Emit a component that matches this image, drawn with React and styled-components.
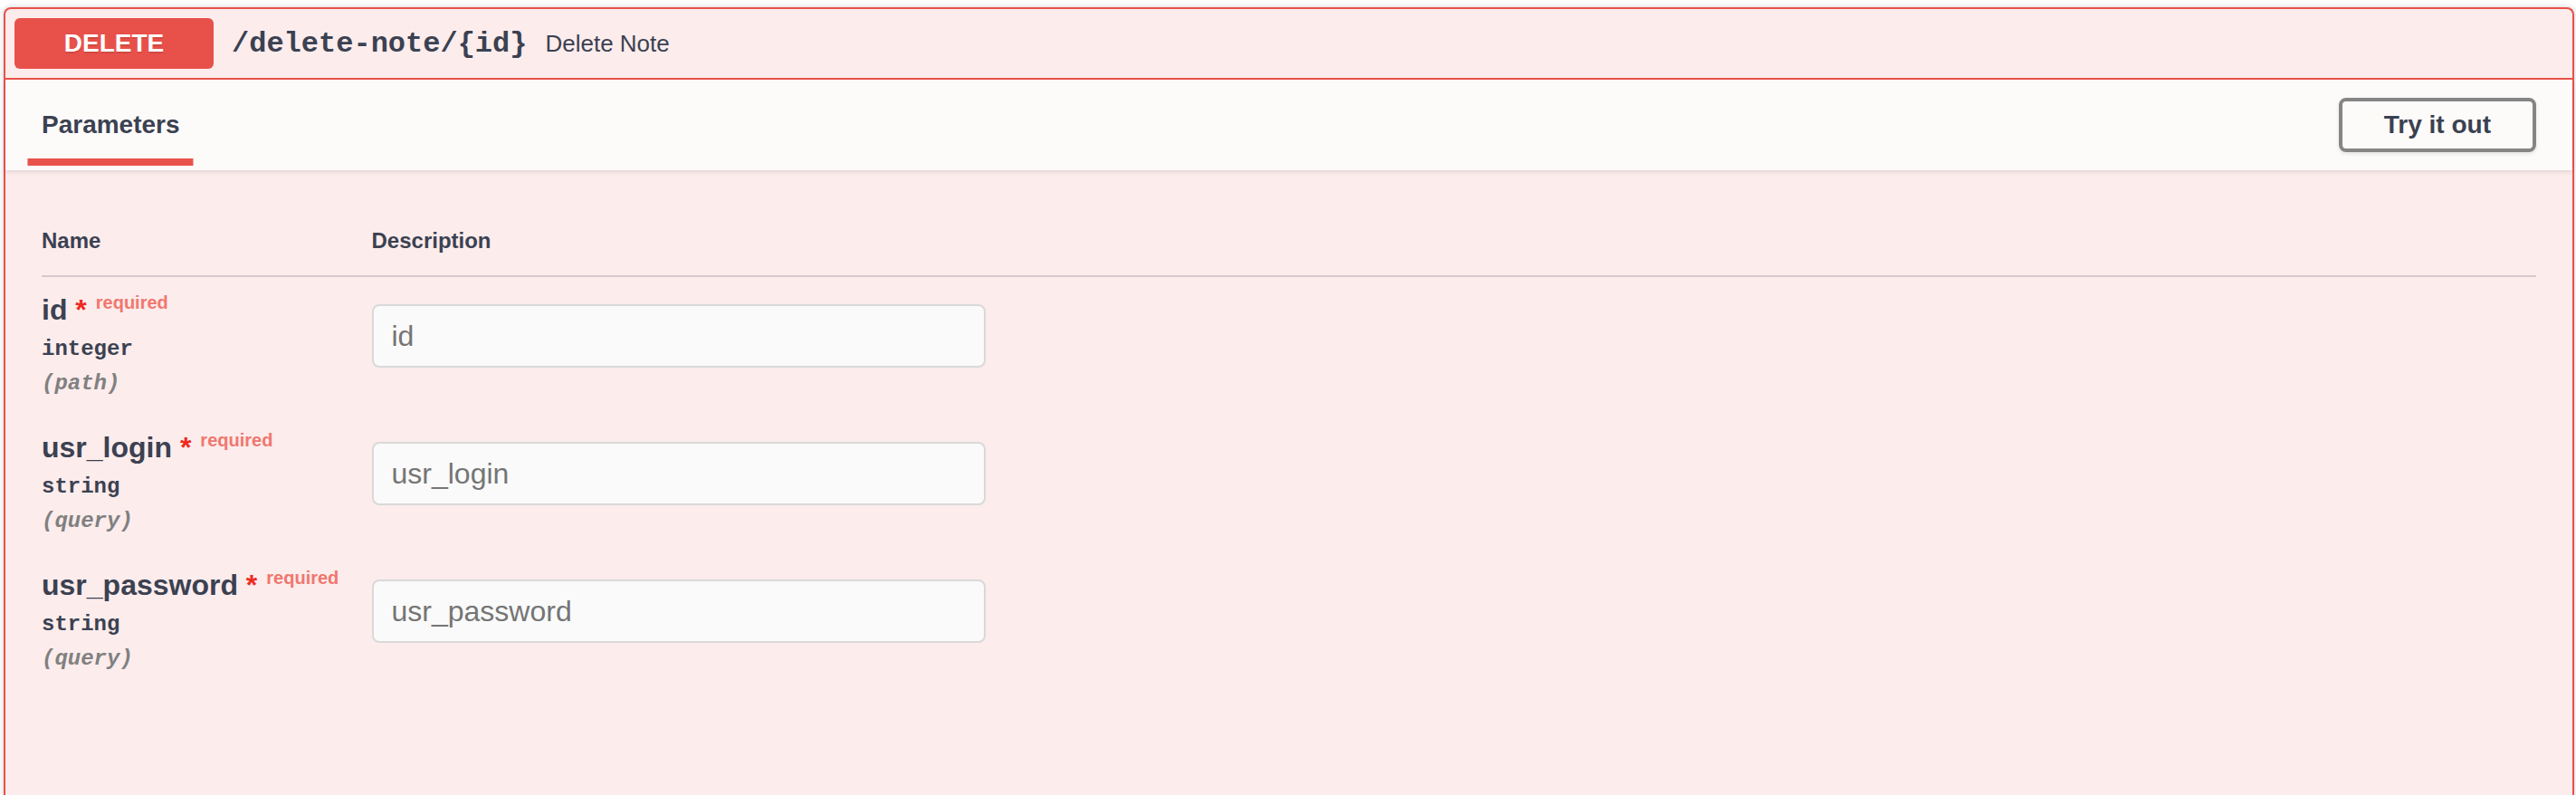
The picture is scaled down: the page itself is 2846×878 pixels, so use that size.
import React from "react";
import styled, { createGlobalStyle } from "styled-components";

const GlobalStyle = createGlobalStyle`
  html, body { margin: 0; padding: 0; background: #ffffff; }
  body {
    font-family: "Liberation Sans", Arial, Helvetica, sans-serif;
    color: #3b4151;
  }
  *, *::before, *::after { box-sizing: border-box; }
`;

const SANS = `"Liberation Sans", Arial, Helvetica, sans-serif`;
const MONO = `"Liberation Mono", "Courier New", Courier, monospace`;
const RED = "#e8524a";
const INK = "#3b4151";

const Page = styled.div`
  padding: 8px 2px 0 4px;
`;

const Opblock = styled.section`
  border: 2px solid ${RED};
  border-bottom: none;
  border-radius: 8px 8px 0 0;
  background: #fcecec;
  box-shadow: 0 0 6px rgba(0, 0, 0, 0.19);
  min-height: 900px;
`;

const Summary = styled.div`
  display: flex;
  align-items: center;
  padding: 10px;
  border-bottom: 2px solid ${RED};
`;

const Method = styled.span`
  display: flex;
  align-items: center;
  justify-content: center;
  width: 220px;
  height: 56px;
  border-radius: 6px;
  background: #e8504a;
  color: #ffffff;
  font-family: ${SANS};
  font-weight: 700;
  font-size: 28px;
  text-shadow: 0 2px 0 rgba(0, 0, 0, 0.1);
`;

const Path = styled.span`
  padding: 0 20px;
  font-family: ${MONO};
  font-weight: 700;
  font-size: 32px;
  color: ${INK};
`;

const SummaryDesc = styled.span`
  font-family: ${SANS};
  font-size: 26px;
  color: ${INK};
`;

const SectionHeader = styled.div`
  display: flex;
  align-items: center;
  justify-content: space-between;
  min-height: 100px;
  padding: 16px 40px;
  background: #fdfbfa;
  box-shadow: 0 2px 4px rgba(0, 0, 0, 0.1);
`;

const TabTitle = styled.h4`
  margin: 0;
  font-family: ${SANS};
  font-size: 28px;
  font-weight: 700;
  color: ${INK};
`;

const ActiveTab = styled.span`
  position: relative;
  &::after {
    content: "";
    position: absolute;
    left: 50%;
    bottom: -30px;
    width: 120%;
    height: 8px;
    transform: translateX(-50%);
    background: ${RED};
  }
`;

const TryButton = styled.button`
  padding: 10px 46px;
  border: 4px solid #858585;
  border-radius: 8px;
  background: transparent;
  box-shadow: 0 2px 4px rgba(0, 0, 0, 0.1);
  font-family: ${SANS};
  font-size: 28px;
  font-weight: 700;
  color: ${INK};
  cursor: pointer;
`;

const TableContainer = styled.div`
  padding: 40px;
`;

const Row = styled.div`
  display: grid;
  grid-template-columns: 364.5px 1fr;
`;

const HeadRow = styled(Row)`
  border-bottom: 2px solid rgba(59, 65, 81, 0.2);
`;

const Th = styled.div`
  padding: 24px 0 25px;
  font-family: ${SANS};
  font-size: 24px;
  line-height: 27px;
  font-weight: 700;
  color: ${INK};
`;

const NameCell = styled.div`
  padding: 18px 0 20px;
`;

const ParamName = styled.div`
  font-family: ${SANS};
  font-size: 32px;
  line-height: 37px;
  font-weight: 700;
  color: ${INK};
  white-space: nowrap;
  &::after {
    content: "required";
    font-size: 20px;
    line-height: 1;
    padding: 0 10px;
    vertical-align: 12px;
    color: #f0776f;
  }
`;

const Star = styled.span`
  color: #ee2a22;
`;

const ParamType = styled.div`
  padding: 11px 0 10px;
  font-family: ${MONO};
  font-size: 24px;
  line-height: 28px;
  font-weight: 700;
  color: ${INK};
`;

const ParamIn = styled.div`
  font-family: ${MONO};
  font-size: 24px;
  line-height: 28px;
  font-weight: 700;
  font-style: italic;
  color: #808080;
`;

const DescCell = styled.div`
  padding-top: 20px;
`;

const Input = styled.input`
  display: block;
  width: 678px;
  height: 70px;
  margin: 10px 0;
  padding: 0 20px;
  border: 2px solid #d9d9d9;
  border-radius: 8px;
  background: #fafafa;
  font-family: ${SANS};
  font-size: 32px;
  color: ${INK};
  outline: none;
  &::placeholder {
    color: #757575;
    opacity: 1;
  }
`;

const params = [
  { name: "id", type: "integer", where: "path" },
  { name: "usr_login", type: "string", where: "query" },
  { name: "usr_password", type: "string", where: "query" },
];

export default function App() {
  return (
    <>
      <GlobalStyle />
      <Page>
        <Opblock>
          <Summary>
            <Method>DELETE</Method>
            <Path>/delete-note/{"{id}"}</Path>
            <SummaryDesc>Delete Note</SummaryDesc>
          </Summary>
          <SectionHeader>
            <TabTitle>
              <ActiveTab>Parameters</ActiveTab>
            </TabTitle>
            <TryButton type="button">Try it out</TryButton>
          </SectionHeader>
          <TableContainer>
            <HeadRow>
              <Th>Name</Th>
              <Th>Description</Th>
            </HeadRow>
            {params.map((p) => (
              <Row key={p.name}>
                <NameCell>
                  <ParamName>
                    {p.name}
                    <Star>{"\u00a0*"}</Star>
                  </ParamName>
                  <ParamType>{p.type}</ParamType>
                  <ParamIn>({p.where})</ParamIn>
                </NameCell>
                <DescCell>
                  <Input type="text" placeholder={p.name} readOnly />
                </DescCell>
              </Row>
            ))}
          </TableContainer>
        </Opblock>
      </Page>
    </>
  );
}
